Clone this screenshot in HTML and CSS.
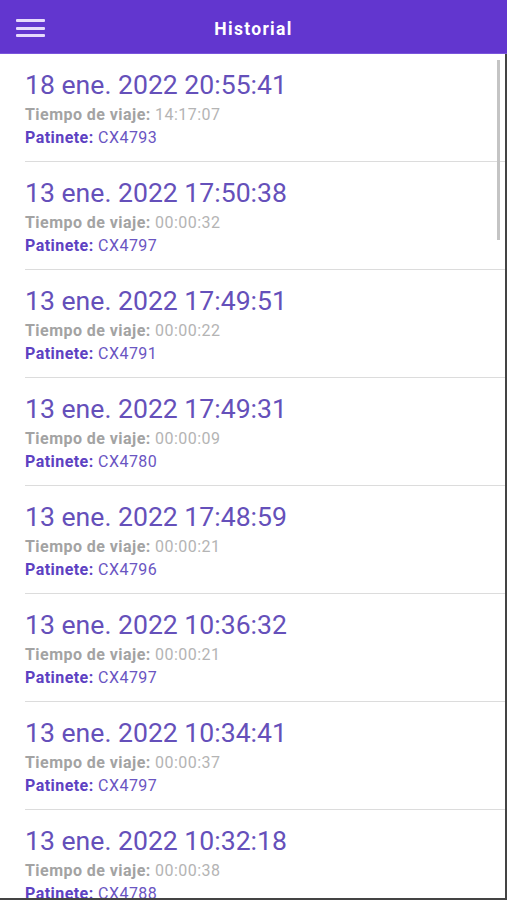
FILE: index.html
```html
<!DOCTYPE html>
<html>
<head>
    <title>Historial</title>
    <link rel="stylesheet" href="styles.css">
</head>
<body>
    <header class="barra">
        <div class="menu">
            <span></span>
            <span></span>
            <span></span>
        </div>
        <h1>Historial</h1>
    </header>
    <section class="lista">
        <div class="viaje">
            <p class="fecha">18 ene. 2022 20:55:41</p>
            <p class="tiempo"><b>Tiempo de viaje:</b> 14:17:07</p>
            <p class="patinete"><b>Patinete:</b> CX4793</p>
        </div>
        <div class="viaje">
            <p class="fecha">13 ene. 2022 17:50:38</p>
            <p class="tiempo"><b>Tiempo de viaje:</b> 00:00:32</p>
            <p class="patinete"><b>Patinete:</b> CX4797</p>
        </div>
        <div class="viaje">
            <p class="fecha">13 ene. 2022 17:49:51</p>
            <p class="tiempo"><b>Tiempo de viaje:</b> 00:00:22</p>
            <p class="patinete"><b>Patinete:</b> CX4791</p>
        </div>
        <div class="viaje">
            <p class="fecha">13 ene. 2022 17:49:31</p>
            <p class="tiempo"><b>Tiempo de viaje:</b> 00:00:09</p>
            <p class="patinete"><b>Patinete:</b> CX4780</p>
        </div>
        <div class="viaje">
            <p class="fecha">13 ene. 2022 17:48:59</p>
            <p class="tiempo"><b>Tiempo de viaje:</b> 00:00:21</p>
            <p class="patinete"><b>Patinete:</b> CX4796</p>
        </div>
        <div class="viaje">
            <p class="fecha">13 ene. 2022 10:36:32</p>
            <p class="tiempo"><b>Tiempo de viaje:</b> 00:00:21</p>
            <p class="patinete"><b>Patinete:</b> CX4797</p>
        </div>
        <div class="viaje">
            <p class="fecha">13 ene. 2022 10:34:41</p>
            <p class="tiempo"><b>Tiempo de viaje:</b> 00:00:37</p>
            <p class="patinete"><b>Patinete:</b> CX4797</p>
        </div>
        <div class="viaje">
            <p class="fecha">13 ene. 2022 10:32:18</p>
            <p class="tiempo"><b>Tiempo de viaje:</b> 00:00:38</p>
            <p class="patinete"><b>Patinete:</b> CX4788</p>
        </div>
        <div class="scroll"></div>
    </section>
</body>
</html>
```

FILE: styles.css
```css
html, body {
    margin: 0;
    padding: 0;
    height: 100%;
    overflow: hidden;
}
body {
    font-family: Roboto, "Liberation Sans", sans-serif;
    background: #fff;
    display: flex;
    flex-direction: column;
}
.barra {
    height: 53px;
    flex-shrink: 0;
    background-color: #6236cf;
    border-bottom: 1px solid #7a55dc;
    display: flex;
    align-items: center;
    justify-content: center;
    position: relative;
}
.barra h1 {
    margin: 4px 0 0 0;
    color: #fff;
    font-size: 17.5px;
    letter-spacing: 1.3px;
    font-weight: bold;
}
.menu {
    position: absolute;
    left: 16px;
    top: 19px;
    display: flex;
    flex-direction: column;
    gap: 4.5px;
}
.menu span {
    display: block;
    width: 29px;
    height: 3px;
    border-radius: 1px;
    background-color: #e6dafc;
}
.lista {
    flex: 1;
    position: relative;
    overflow: hidden;
    border-right: 2px solid #444;
    border-bottom: 2px solid #444;
}
.viaje {
    margin-left: 25px;
    height: 108px;
    box-sizing: border-box;
    padding-top: 15px;
    border-bottom: 1px solid #dcdcdc;
}
.viaje p {
    margin: 0;
}
.fecha {
    font-size: 26.6px;
    line-height: 32px;
    color: #6550ba;
    margin-bottom: 2px !important;
}
.tiempo, .patinete {
    font-size: 16px;
    line-height: 23px;
    letter-spacing: 0.45px;
}
.tiempo {
    color: #b4b4b4;
}
.tiempo b {
    color: #a3a3a3;
}
.patinete {
    color: #6a55c2;
}
.patinete b {
    color: #5d41c2;
}
.scroll {
    position: absolute;
    right: 5px;
    top: 6px;
    width: 3px;
    height: 180px;
    background-color: #c4c4c4;
}
```
